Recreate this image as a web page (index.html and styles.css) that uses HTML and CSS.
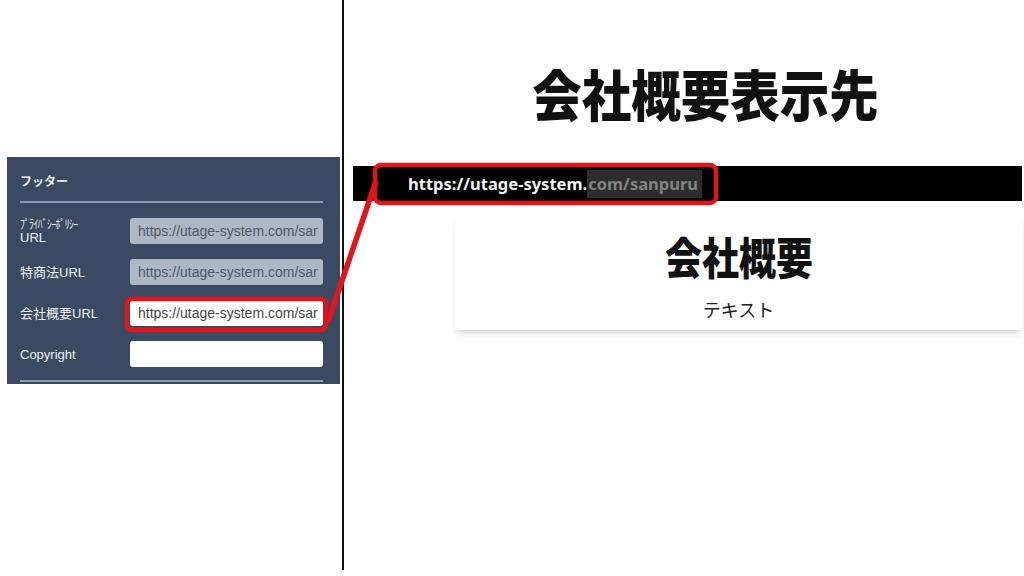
FILE: index.html
```html
<!DOCTYPE html>
<html lang="ja">
<head>
<meta charset="utf-8">
<title>会社概要表示先</title>
<link rel="stylesheet" href="styles.css">
</head>
<body>
<div class="page">
  <div class="left">
    <section class="panel">
      <div class="panel-head">フッター</div>
      <div class="rows">
        <div class="label small"><span class="hw">ﾌﾟﾗｲﾊﾞｼｰﾎﾟﾘｼｰ</span><span>URL</span></div>
        <div class="input disabled">https://utage-system.com/sar</div>
        <div class="label">特商法URL</div>
        <div class="input disabled">https://utage-system.com/sar</div>
        <div class="label">会社概要URL</div>
        <div class="input">https://utage-system.com/sar</div>
        <div class="label">Copyright</div>
        <div class="input"></div>
      </div>
      <div class="panel-foot"></div>
    </section>
  </div>
  <div class="divider"></div>
  <div class="right">
    <h1 class="title"><span>会社概要表示先</span></h1>
    <div class="bar"><span class="url">https://utage-system.</span><span class="sel">com/sanpuru</span></div>
    <div class="card">
      <h2 class="card-title"><span>会社概要</span></h2>
      <p class="card-text">テキスト</p>
    </div>
  </div>
</div>
<svg class="annot" width="1024" height="576" viewBox="0 0 1024 576">
  <rect x="127" y="299" width="199" height="31" rx="5" fill="none" stroke="#e3141a" stroke-width="4.5"/>
  <rect x="375" y="165" width="341" height="38" rx="6" fill="none" stroke="#e3141a" stroke-width="4.5"/>
  <line x1="328" y1="322" x2="376" y2="181" stroke="#e3141a" stroke-width="5.5"/>
</svg>
</body>
</html>
```

FILE: styles.css
```css
* { box-sizing: border-box; }
html, body { margin: 0; padding: 0; background: #fff; }
body { width: 1024px; height: 576px; overflow: hidden; position: relative; font-family: "Liberation Sans", "Noto Sans CJK JP", sans-serif; }

.page { display: flex; width: 1024px; height: 576px; }

.left { width: 342px; flex: none; padding: 157px 0 0 7px; }
.panel {
  width: 333px; height: 227px; overflow: hidden;
  background: #3c4962;
  padding: 0 17px 0 13px;
  color: #eef0f4;
}
.panel-head {
  height: 46px; display: flex; align-items: center;
  font-family: "Noto Sans CJK JP", sans-serif;
  font-weight: 700; font-size: 12px;
  border-bottom: 2px solid #8e98aa;
  padding-top: 2px;
}
.rows {
  display: grid;
  grid-template-columns: 110px 193px;
  grid-auto-rows: 26px;
  row-gap: 15px;
  margin-top: 15px;
  align-items: center;
}
.label { font-size: 13px; line-height: 15px; font-family: "Liberation Sans", "Noto Sans CJK JP", sans-serif; }
.label.small { display: flex; flex-direction: column; margin-top: 1px; }
.label .hw {
  font-family: "Noto Sans CJK JP", sans-serif; font-size: 12px; line-height: 12px;
  letter-spacing: -0.6px; white-space: nowrap;
  display: inline-block; transform: scaleX(0.8); transform-origin: left center;
}
.input {
  height: 26px; border-radius: 3px; background: #fff;
  font-size: 14px; line-height: 26px; color: #444;
  padding: 0 7px 0 8px; white-space: nowrap; overflow: hidden;
}
.input.disabled { background: #aeb7c6; color: #515867; }
.panel-foot { margin-top: 13px; border-top: 2px solid #8e98aa; }

.divider { width: 2px; height: 570px; background: #111; flex: none; }

.right { flex: 1; padding-top: 62px; }
.title {
  margin: 0; padding-left: 44px; text-align: center;
  font-family: "Noto Sans CJK JP", sans-serif; font-weight: 900;
  font-size: 55px; line-height: 60px; color: #111;
}
.title span { display: inline-block; transform: scaleX(0.9); }
.bar {
  margin: 44px 2px 0 9px; height: 35px; background: #000;
  display: flex; align-items: center; padding-left: 55px;
  font-family: "Noto Sans", sans-serif; font-weight: 700; font-size: 16.5px;
}
.url { color: #f4f4f4; }
.sel { background: #2d2d2d; color: #838383; line-height: 28px; padding: 0 4px 0 1px; }

.card {
  margin: 14px 2px 0 111px; height: 115px; background: #fff;
  box-shadow: 0 5px 6px -2px rgba(0,0,0,0.18);
  text-align: center; padding-top: 17px;
}
.card-title {
  margin: 0; font-family: "Noto Sans CJK JP", sans-serif; font-weight: 900;
  font-size: 44px; line-height: 48px; color: #111;
}
.card-title span { display: inline-block; transform: scaleX(0.84); }
.card-text {
  margin: 17px 0 0; font-family: "Noto Sans CJK JP", sans-serif; font-weight: 400;
  font-size: 18px; line-height: 24px; color: #222;
}

.annot { position: absolute; left: 0; top: 0; pointer-events: none; }
```
